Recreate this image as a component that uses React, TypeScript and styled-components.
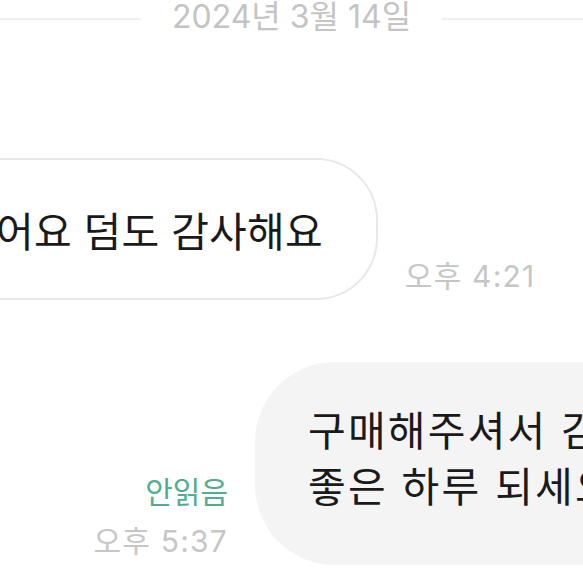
import styled, { createGlobalStyle } from "styled-components";

const GlobalStyle = createGlobalStyle`
  html, body {
    margin: 0;
    padding: 0;
    background: #ffffff;
  }
  body {
    font-family: "Inter", "Noto Sans CJK KR", sans-serif;
  }
`;

const Screen = styled.div`
  width: 583px;
  height: 583px;
  overflow: hidden;
  display: flex;
  flex-direction: column;
  background: #ffffff;
`;

const DateDivider = styled.div`
  display: flex;
  align-items: center;
  gap: 31px;
  height: 36px;
`;

const Line = styled.div`
  flex: 1;
  height: 2px;
  margin-top: 2px;
  background: #f0f0f0;
`;

const DateText = styled.span`
  font-size: 32px;
  line-height: 36px;
  color: #c4c4c4;
  margin-top: -3px;
  white-space: nowrap;
`;

const Row = styled.div<{ $top: number; $gap: number }>`
  display: flex;
  align-items: flex-end;
  gap: ${(p) => p.$gap}px;
  margin-top: ${(p) => p.$top}px;
`;

const ReceivedBubble = styled.div`
  flex-shrink: 0;
  margin-left: -63px;
  padding: 43px 53px 37px 57px;
  border: 2px solid #e8e8e8;
  border-radius: 62px;
  background: #ffffff;
  font-size: 41px;
  line-height: 58px;
  color: #1a1a1a;
  letter-spacing: 0.2px;
  white-space: nowrap;
`;

const SentBubble = styled.div`
  flex-shrink: 0;
  padding: 41px 40px 50px 53px;
  border-radius: 80px 0 0 80px;
  background: #f4f4f4;
  font-size: 41px;
  line-height: 56px;
  color: #1a1a1a;
  letter-spacing: 2.2px;
  white-space: nowrap;
`;

const Meta = styled.div<{ $width?: number }>`
  display: flex;
  flex-direction: column;
  align-items: flex-end;
  flex-shrink: 0;
  margin-bottom: 4px;
  width: ${(p) => (p.$width ? `${p.$width}px` : "auto")};
`;

const Status = styled.span`
  font-size: 30px;
  line-height: 38px;
  margin-bottom: 10px;
  color: #52ad8e;
`;

const Time = styled.span`
  font-size: 30px;
  line-height: 40px;
  letter-spacing: 1.2px;
  color: #c6c6c6;
  white-space: nowrap;
`;

export default function App() {
  return (
    <>
      <GlobalStyle />
      <Screen>
        <DateDivider>
          <Line />
          <DateText>2024년 3월 14일</DateText>
          <Line />
        </DateDivider>

        <Row $top={122} $gap={27}>
          <ReceivedBubble>어요 덤도 감사해요</ReceivedBubble>
          <Meta>
            <Time>오후 4:21</Time>
          </Meta>
        </Row>

        <Row $top={62} $gap={27}>
          <Meta $width={228}>
            <Status>안읽음</Status>
            <Time>오후 5:37</Time>
          </Meta>
          <SentBubble>
            구매해주셔서 감사합니다
            <br />
            좋은 하루 되세요
          </SentBubble>
        </Row>
      </Screen>
    </>
  );
}
